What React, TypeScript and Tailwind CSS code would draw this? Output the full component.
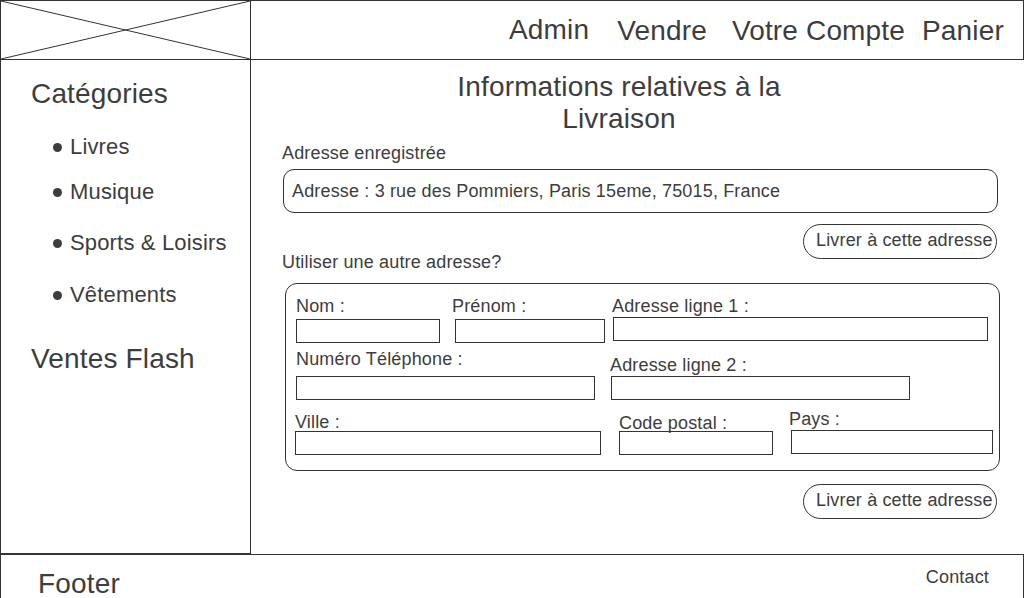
import React from "react";

function Field({
  className,
  labelClass,
  inputClass,
  label,
}: {
  className: string;
  labelClass: string;
  inputClass: string;
  label: string;
}) {
  return (
    <div className={`flex flex-col shrink-0 ${className}`}>
      <span className={`text-[18px] leading-[22px] whitespace-nowrap ${labelClass}`}>{label}</span>
      <div className={`h-[24px] border border-[#333] ${inputClass}`} />
    </div>
  );
}

function DeliverButton({ className }: { className: string }) {
  return (
    <div
      className={`self-start w-[194px] h-[35px] border border-[#333] rounded-full pl-[12px] pt-[4px] text-[18px] leading-[22px] whitespace-nowrap ${className}`}
    >
      Livrer à cette adresse
    </div>
  );
}

function Bullet({ className, children }: { className: string; children: React.ReactNode }) {
  return (
    <li className={`flex items-center pl-[52px] text-[22px] leading-[26px] ${className}`}>
      <span className="w-[9px] h-[9px] rounded-full bg-[#3d3d3d] mr-[8px]" />
      <span>{children}</span>
    </li>
  );
}

export default function App() {
  return (
    <div className="w-[1024px] h-[598px] overflow-hidden bg-white text-[#3d3d3d] tracking-[0.01em] [font-family:'Liberation_Sans',Arial,sans-serif]">
      {/* Header */}
      <header className="flex h-[60px] border border-[#333]">
        <div className="w-[250px] h-full border-r border-[#333] shrink-0">
          <svg className="block w-full h-full" viewBox="0 0 249 58" preserveAspectRatio="none">
            <line x1="0" y1="0" x2="249" y2="58" stroke="#333" strokeWidth="1" />
            <line x1="0" y1="58" x2="249" y2="0" stroke="#333" strokeWidth="1" />
          </svg>
        </div>
        <nav className="flex-1 flex items-center pl-[258px] pt-[2px] text-[28px] leading-[32px] whitespace-nowrap">
          <span className="mb-[2px]">Admin</span>
          <span className="ml-[28px]">Vendre</span>
          <span className="ml-[25px]">Votre Compte</span>
          <span className="ml-[17px]">Panier</span>
        </nav>
      </header>

      {/* Body */}
      <div className="flex h-[494px]">
        <aside className="w-[251px] shrink-0 border-l border-r border-b border-[#333] pt-[18px]">
          <div className="pl-[30px] text-[28px] leading-[32px]">Catégories</div>
          <ul className="mt-[24px]">
            <Bullet className="">Livres</Bullet>
            <Bullet className="mt-[19px]">Musique</Bullet>
            <Bullet className="mt-[25px]">Sports &amp; Loisirs</Bullet>
            <Bullet className="mt-[26px]">Vêtements</Bullet>
          </ul>
          <div className="mt-[35px] pl-[30px] text-[28px] leading-[32px]">Ventes Flash</div>
        </aside>

        <main className="flex-1 flex flex-col pl-[31px]">
          <h1 className="mt-[11px] ml-[167px] w-[340px] text-center text-[28px] leading-[32px] font-normal">
            Informations relatives à la Livraison
          </h1>
          <div className="mt-[7px] text-[18px] leading-[22px]">Adresse enregistrée</div>
          <div className="mt-[5px] ml-[1px] w-[715px] h-[44px] border border-[#333] rounded-[11px] pl-[8px] flex items-center text-[18px] leading-[22px] whitespace-nowrap">
            Adresse : 3 rue des Pommiers, Paris 15eme, 75015, France
          </div>
          <DeliverButton className="mt-[11px] ml-[521px]" />
          <div className="mt-[-8px] self-start text-[18px] leading-[22px]">Utiliser une autre adresse?</div>

          <div className="mt-[10px] ml-[3px] w-[715px] h-[188px] border border-[#333] rounded-[12px] flex flex-col">
            <div className="flex">
              <Field className="ml-[10px]" labelClass="mt-[11px]" inputClass="mt-[2px] w-[144px]" label="Nom :" />
              <Field className="ml-[12px]" labelClass="mt-[11px]" inputClass="mt-[2px] ml-[3px] w-[150px]" label="Prénom :" />
              <Field className="ml-[7px]" labelClass="mt-[11px]" inputClass="mt-[0px] ml-[1px] w-[375px]" label="Adresse ligne 1 :" />
            </div>
            <div className="flex">
              <Field className="ml-[10px]" labelClass="mt-[5px]" inputClass="mt-[6px] w-[299px]" label="Numéro Téléphone :" />
              <Field className="ml-[15px]" labelClass="mt-[11px]" inputClass="mt-[0px] ml-[1px] w-[299px]" label="Adresse ligne 2 :" />
            </div>
            <div className="flex">
              <Field className="ml-[9px]" labelClass="mt-[11px]" inputClass="mt-[-2px] w-[306px]" label="Ville :" />
              <Field className="ml-[18px]" labelClass="mt-[12px]" inputClass="mt-[-3px] w-[154px]" label="Code postal :" />
              <Field className="ml-[16px]" labelClass="mt-[8px]" inputClass="mt-[0px] ml-[2px] w-[202px]" label="Pays :" />
            </div>
          </div>

          <DeliverButton className="mt-[13px] ml-[521px]" />
        </main>
      </div>

      {/* Footer */}
      <footer className="flex justify-between items-start h-[60px] border-t border-l border-r border-[#333]">
        <div className="mt-[13px] pl-[37px] text-[28px] leading-[32px]">Footer</div>
        <div className="mt-[11px] pr-[34px] text-[18px] leading-[22px]">Contact</div>
      </footer>
    </div>
  );
}
